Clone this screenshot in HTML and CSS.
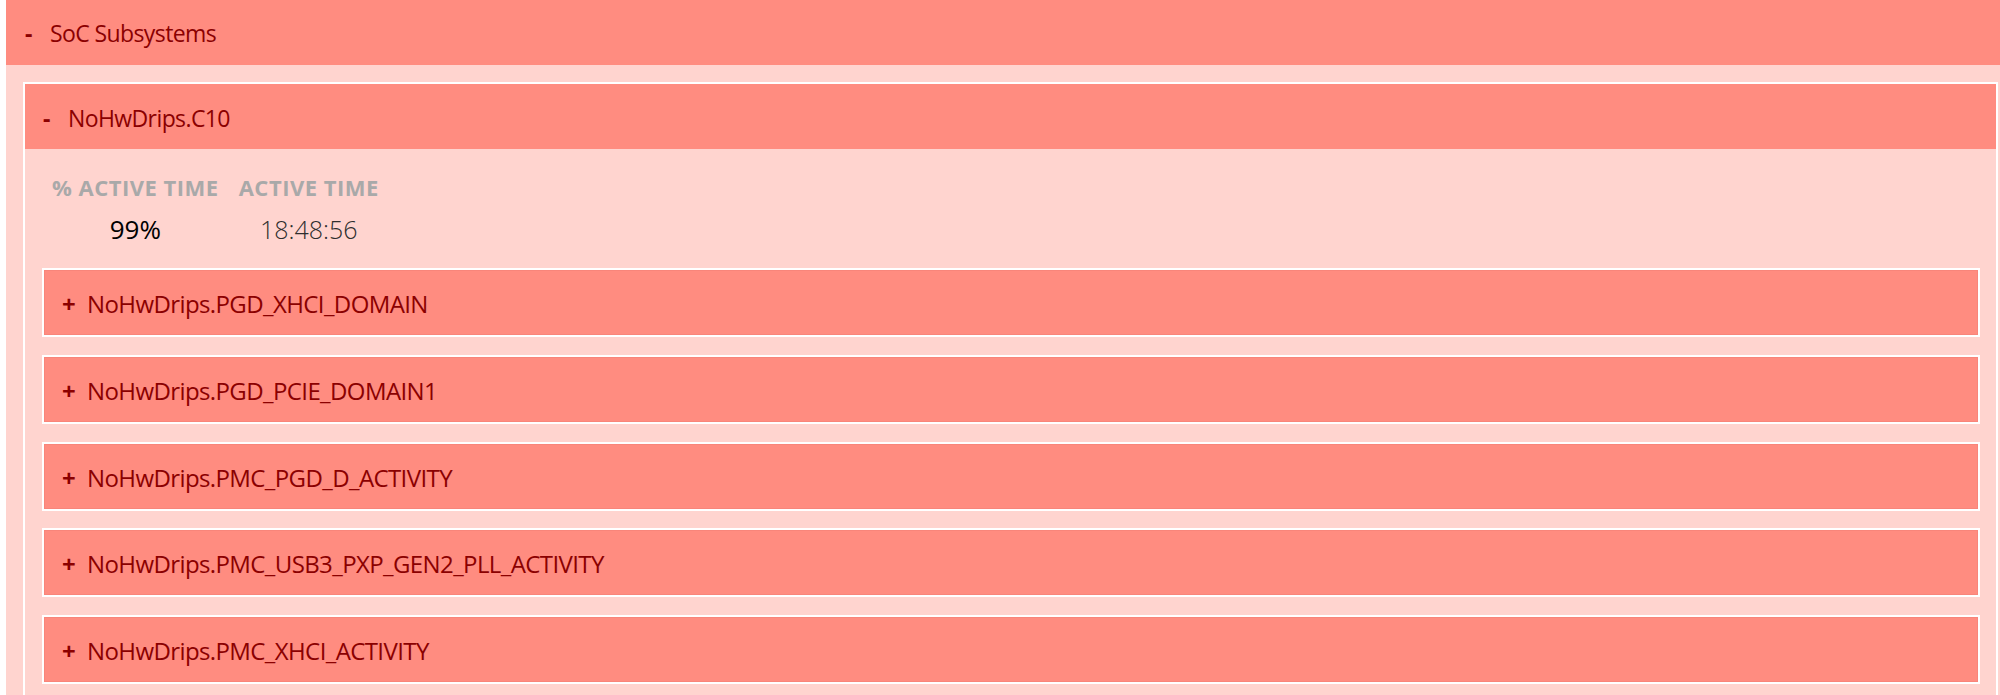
FILE: index.html
```html
<!DOCTYPE html>
<html lang="en">
<head>
  <meta charset="UTF-8" />
  <title>SoC Subsystems</title>
  <link rel="stylesheet" href="styles.css">
</head>
<body>
  <div class="page">
    <div class="group">
      <div class="group-head top"><span class="toggle">-</span>SoC Subsystems</div>
      <div class="group-body">

        <div class="group nested">
          <div class="group-head"><span class="toggle">-</span>NoHwDrips.C10</div>
          <div class="group-body">
            <table class="stats">
              <tr><th>% ACTIVE TIME</th><th>ACTIVE TIME</th></tr>
              <tr><td class="pct">99%</td><td class="time">18:48:56</td></tr>
            </table>

            <div class="group leaf"><div class="group-head"><span class="toggle">+</span>NoHwDrips.PGD_XHCI_DOMAIN</div></div>
            <div class="group leaf"><div class="group-head"><span class="toggle">+</span>NoHwDrips.PGD_PCIE_DOMAIN1</div></div>
            <div class="group leaf"><div class="group-head"><span class="toggle">+</span>NoHwDrips.PMC_PGD_D_ACTIVITY</div></div>
            <div class="group leaf"><div class="group-head"><span class="toggle">+</span>NoHwDrips.PMC_USB3_PXP_GEN2_PLL_ACTIVITY</div></div>
            <div class="group leaf"><div class="group-head"><span class="toggle">+</span>NoHwDrips.PMC_XHCI_ACTIVITY</div></div>
          </div>
        </div>

      </div>
    </div>
  </div>
</body>
</html>
```

FILE: styles.css
```css
body {
  margin: 0;
  font-family: "Open Sans", "Noto Sans", sans-serif;
  background: #fff;
}
.page {
  padding-left: 6px;
}
.group-head {
  box-sizing: border-box;
  height: 65px;
  line-height: 65px;
  padding-left: 18px;
  background: #ff8c80;
  color: #8b0000;
  font-size: 23px;
  letter-spacing: -0.6px;
  white-space: nowrap;
}
.group-head.top {
  padding-top: 1px;
  line-height: 64px;
  padding-left: 19px;
}
.toggle {
  display: inline-block;
  width: 25px;
  font-weight: 700;
  letter-spacing: 0;
}
.group-body {
  background: #ffd4cf;
  padding: 17px 2px 0 17px;
}

/* second level: white frame round the block */
.nested {
  border: 2px solid #fff;
}
.nested > .group-head {
  padding-top: 4px;
  line-height: 61px;
}
.nested > .group-body {
  padding: 0 16px 0 17px;
}

.stats {
  border-collapse: collapse;
  margin: 0 0 22px 0;
}
.stats th {
  padding: 24px 10px 0;
  line-height: 29px;
  font-size: 22px;
  font-weight: 700;
  letter-spacing: 0.5px;
  color: #a9a9a9;
  white-space: nowrap;
}
.stats td {
  padding: 10px 10px 0;
  line-height: 34px;
  font-size: 25px;
  text-align: center;
}
.stats .pct {
  color: #000;
  font-size: 26px;
}
.stats .time {
  color: #2e2e2e;
  font-weight: 300;
}

/* collapsed leaf rows */
.leaf {
  border: 2px solid #fff;
  margin-bottom: 17.75px;
}
.leaf .group-head {
  height: 65px;
  padding-top: 2px;
  line-height: 63px;
  font-size: 24px;
  box-shadow: inset 0 0 0 1px #f8857a;
}
```
